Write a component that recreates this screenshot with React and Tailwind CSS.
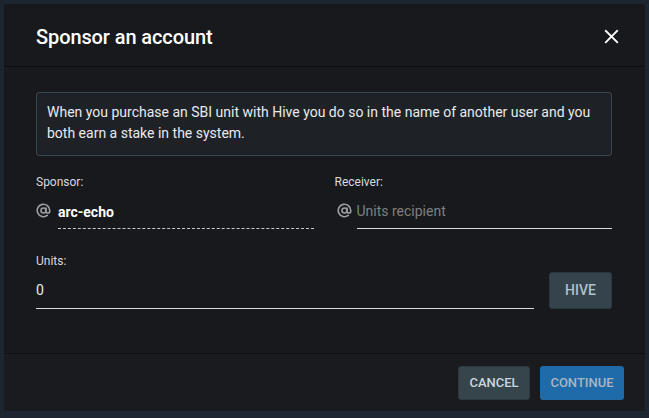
import React, { useState } from "react";

function AtIcon({ className }) {
    return (
        <svg className={className} viewBox="0 0 24 24" fill="none" stroke="currentColor" strokeWidth="2.6" strokeLinecap="round">
            <circle cx="12" cy="12" r="4" />
            <path d="M16 8v5a3 3 0 006 0v-1a10 10 0 10-3.92 7.94" />
        </svg>
    );
}

export default function App() {
    const [receiver, setReceiver] = useState("");
    const [units, setUnits] = useState("0");

    return (
        <div className="h-screen w-full bg-[#1c2530] pt-[4px] px-[4px]" style={{ fontFamily: "Roboto, 'Liberation Sans', sans-serif" }}>
            <div className="w-[641px] h-[407px] bg-[#18191c] rounded-[3px] flex flex-col overflow-hidden">
                {/* header */}
                <div className="h-[63px] shrink-0 flex items-center justify-between pt-[3px] pl-[32px] pr-[26px] border-b border-[#0e0f10]">
                    <h2 className="text-[20px] font-medium text-white tracking-[-0.1px]">Sponsor an account</h2>
                    <button className="text-white">
                        <svg className="w-[15px] h-[15px]" viewBox="0 0 16 16" stroke="currentColor" strokeWidth="2" strokeLinecap="square">
                            <path d="M2 2l12 12M14 2L2 14" />
                        </svg>
                    </button>
                </div>

                {/* body */}
                <div className="h-[286px] shrink-0 pt-[25px] pl-[32px] pr-[33px]">
                    <div className="h-[64px] border border-[#3b4750] bg-[#1e2125] rounded-[3px] px-[10px] pt-[9px] text-[14px] leading-[21px] text-[#e8eaec]">
                        When you purchase an SBI unit with Hive you do so in the name of another user and you both earn a stake in the system.
                    </div>

                    <div className="grid grid-cols-2 gap-[21px] mt-[19px]">
                        <div>
                            <div className="text-[12px] leading-[14px] text-[#d8dadc]">Sponsor:</div>
                            <div className="flex items-start mt-[8px]">
                                <AtIcon className="w-[15px] h-[15px] text-[#9a9ea2] mr-[7px] mt-[6px]" />
                                <div className="flex-1 border-b border-dashed border-[#c8cacc] h-[32px] pt-[5px] text-[14px] leading-[20px] font-bold text-white">
                                    arc-echo
                                </div>
                            </div>
                        </div>
                        <div>
                            <div className="text-[12px] leading-[14px] text-[#d8dadc]">Receiver:</div>
                            <div className="flex items-start mt-[8px]">
                                <AtIcon className="w-[15px] h-[15px] text-[#9a9ea2] mr-[5px] ml-[2px] mt-[6px]" />
                                <input
                                    value={receiver}
                                    onChange={(e) => setReceiver(e.target.value)}
                                    placeholder="Units recipient"
                                    className="flex-1 min-w-0 bg-transparent outline-none border-b border-[#d8dadc] h-[32px] pb-[4px] text-[14px] leading-[20px] text-white placeholder:text-[#7c8084]"
                                />
                            </div>
                        </div>
                    </div>

                    <div className="mt-[25px] text-[12px] leading-[14px] text-[#d8dadc]">Units:</div>
                    <div className="flex items-end gap-[15px] mt-[3px]">
                        <input
                            value={units}
                            onChange={(e) => setUnits(e.target.value)}
                            className="flex-1 min-w-0 bg-transparent outline-none border-b border-[#d8dadc] h-[38px] text-[14px] text-[#eceeef]"
                        />
                        <button className="w-[63px] h-[37px] rounded-[3px] bg-[#35434c] border border-[#2c383f] text-[14px] font-medium text-[#aec2cf]">
                            HIVE
                        </button>
                    </div>
                </div>

                {/* footer */}
                <div className="flex-1 border-t border-[#0e0f10] bg-[#1a1b1e] flex items-start justify-end gap-[10px] pt-[12px] pr-[21px]">
                    <button className="w-[72px] h-[34px] rounded-[3px] bg-[#36444c] border border-[#2e3a41] text-[13px] font-medium text-[#ccd6dc]">
                        CANCEL
                    </button>
                    <button className="w-[84px] h-[34px] rounded-[3px] bg-[#1f6aa8] text-[13px] font-medium text-[#a9b6c2]">
                        CONTINUE
                    </button>
                </div>
            </div>
        </div>
    );
}
